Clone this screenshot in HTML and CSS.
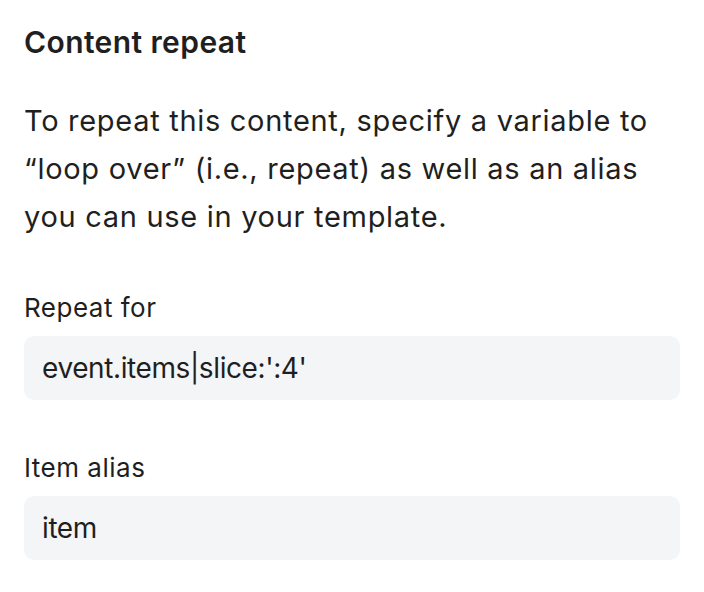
FILE: index.html
```html
<!DOCTYPE html>
<html lang="en">

<head>
    <meta charset="UTF-8">
    <meta name="viewport" content="width=device-width, initial-scale=1.0">
    <title>Content repeat</title>
    <link rel="stylesheet" href="styles.css">
</head>

<body>
    <div class="panel">
        <h2 class="title">Content repeat</h2>
        <p class="help">To repeat this content, specify a variable to &ldquo;loop over&rdquo; (i.e., repeat) as well as an alias you can use in your template.</p>

        <div class="field">
            <label for="repeatFor">Repeat for</label>
            <input id="repeatFor" type="text" value="event.items|slice:':4'">
        </div>

        <div class="field">
            <label for="itemAlias">Item alias</label>
            <input id="itemAlias" type="text" value="item">
        </div>
    </div>
</body>

</html>
```

FILE: styles.css
```css
body {
    font-family: Inter, "Noto Sans", sans-serif;
    background-color: #fff;
    color: #1f1f21;
    margin: 0;
    padding: 0;
}

.panel {
    padding: 24px 24px 0 24px;
}

.title {
    font-size: 30px;
    font-weight: 600;
    line-height: 36px;
    letter-spacing: 0.4px;
    margin: 0 0 37px 0;
}

.help {
    font-size: 29px;
    line-height: 48px;
    letter-spacing: 0.7px;
    margin: 0 0 51px 0;
}

.field {
    display: flex;
    flex-direction: column;
    gap: 12px;
    margin-bottom: 52px;
}

label {
    font-size: 26px;
    line-height: 32px;
    letter-spacing: 0.5px;
}

input {
    font-family: inherit;
    font-size: 28px;
    letter-spacing: -0.4px;
    color: #1f1f21;
    height: 64px;
    padding: 0 18px;
    border: none;
    border-radius: 10px;
    background-color: #f4f5f7;
    outline: none;
}
```
